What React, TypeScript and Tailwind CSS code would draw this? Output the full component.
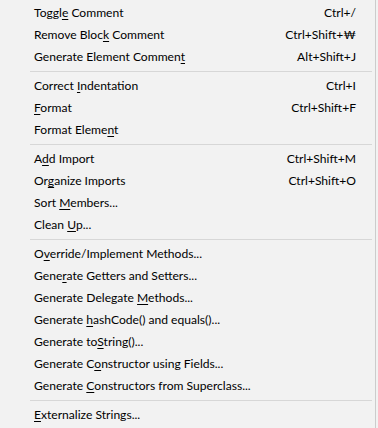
import React from 'react';

type Item = { pre: string; key: string; post: string; shortcut?: string };

const groups: Item[][] = [
  [
    { pre: 'Toggl', key: 'e', post: ' Comment', shortcut: 'Ctrl+/' },
    { pre: 'Remove Bloc', key: 'k', post: ' Comment', shortcut: 'Ctrl+Shift+₩' },
    { pre: 'Generate Element Commen', key: 't', post: '', shortcut: 'Alt+Shift+J' },
  ],
  [
    { pre: 'Correct ', key: 'I', post: 'ndentation', shortcut: 'Ctrl+I' },
    { pre: '', key: 'F', post: 'ormat', shortcut: 'Ctrl+Shift+F' },
    { pre: 'Format Eleme', key: 'n', post: 't' },
  ],
  [
    { pre: 'A', key: 'd', post: 'd Import', shortcut: 'Ctrl+Shift+M' },
    { pre: 'Or', key: 'g', post: 'anize Imports', shortcut: 'Ctrl+Shift+O' },
    { pre: 'Sort ', key: 'M', post: 'embers...' },
    { pre: 'Clean ', key: 'U', post: 'p...' },
  ],
  [
    { pre: 'O', key: 'v', post: 'erride/Implement Methods...' },
    { pre: 'Gene', key: 'r', post: 'ate Getters and Setters...' },
    { pre: 'Generate Delegate ', key: 'M', post: 'ethods...' },
    { pre: 'Generate ', key: 'h', post: 'ashCode() and equals()...' },
    { pre: 'Generate to', key: 'S', post: 'tring()...' },
    { pre: 'Generate C', key: 'o', post: 'nstructor using Fields...' },
    { pre: 'Generate ', key: 'C', post: 'onstructors from Superclass...' },
  ],
  [{ pre: '', key: 'E', post: 'xternalize Strings...' }],
];

const Row = ({ item }: { item: Item }) => (
  <div className="flex h-[22px] items-center pl-[34px] pr-[19px]">
    <span className="flex-1 whitespace-pre">
      {item.pre}
      <span className="underline underline-offset-2">{item.key}</span>
      {item.post}
    </span>
    {item.shortcut && <span className="whitespace-pre">{item.shortcut}</span>}
  </div>
);

export default function App() {
  return (
    <div
      className="flex h-[428px] w-[378px] bg-[#f2f2f2] text-[12.1px] text-black"
      style={{ fontFamily: 'Lato, "Noto Sans CJK KR", sans-serif' }}
    >
      <div className="flex w-[376px] flex-col border-r border-[#cccccc] pt-[2px]">
        {groups.map((g, gi) => (
          <div key={gi}>
            {gi > 0 && (
              <div className="flex h-[7px] items-center pl-[30px] pr-[3px]">
                <div className="h-px w-full bg-[#d7d7d7]" />
              </div>
            )}
            {g.map((item, ii) => (
              <Row key={ii} item={item} />
            ))}
          </div>
        ))}
      </div>
    </div>
  );
}
